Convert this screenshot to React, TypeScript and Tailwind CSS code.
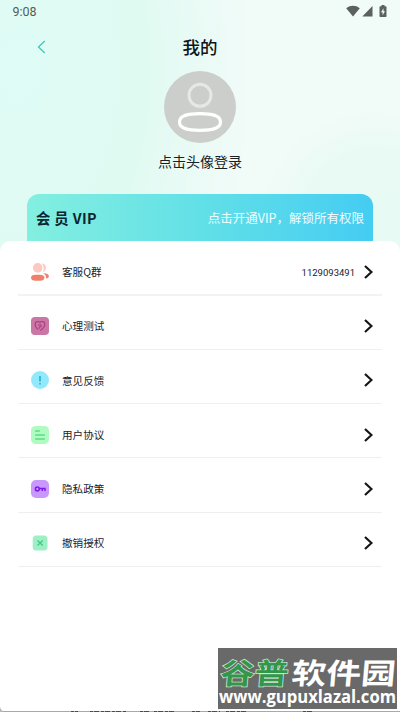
import type { ReactNode } from "react";

const ROWS: { label: string; value?: string; icon: ReactNode }[] = [
  { label: "客服Q群", value: "1129093491", icon: <GroupIcon /> },
  { label: "心理测试", icon: <HeartIcon /> },
  { label: "意见反馈", icon: <FeedbackIcon /> },
  { label: "用户协议", icon: <AgreementIcon /> },
  { label: "隐私政策", icon: <KeyIcon /> },
  { label: "撤销授权", icon: <RevokeIcon /> },
];

function GroupIcon() {
  return (
    <svg width="20" height="20" viewBox="0 0 20 20">
      <path d="M11.800 1.500c5.200 0 5.600 7.300.800 8.800 1.700-2.600 1.700-5.900-.800-8.800Z" fill="#fbc9c1" />
      <circle cx="7.700" cy="5.900" r="4.800" fill="#fbc9c1" />
      <rect x="1" y="12.700" width="13.400" height="6" rx="4.500" ry="3" fill="#f0806d" />
      <path d="M13.200 11.200c3-.300 5.600.900 5.700 2.900.100 1.600-.800 2.300-2.900 2.500.300-2.400-.500-4-2.800-5.400Z" fill="#f0806d" />
    </svg>
  );
}

function HeartIcon() {
  return (
    <svg width="20" height="20" viewBox="0 0 20 20">
      <rect x="1" y="1" width="18" height="18" rx="4" fill="#c977a5" />
      <path d="M8 13.500C5.800 11.600 5 9.900 5.100 8.200c.200-2.900 3.200-3.400 4.900-1.700 1.700-1.700 4.700-1.200 4.900 1.700.100 2.300-1.900 4.300-4.600 6.300" fill="none" stroke="#b33c82" strokeWidth="1.200" />
      <path d="M8 8.900h3.200v1.900H9.300v2" fill="none" stroke="#b33c82" strokeWidth="1" />
    </svg>
  );
}

function FeedbackIcon() {
  return (
    <svg width="20" height="20" viewBox="0 0 20 20">
      <circle cx="10" cy="10" r="9" fill="#93e9fc" />
      <path d="M10 6v5.500M10 13v1.600" stroke="#23b9d2" strokeWidth="1.700" />
    </svg>
  );
}

function AgreementIcon() {
  return (
    <svg width="20" height="20" viewBox="0 0 20 20">
      <rect x="1" y="1" width="18" height="18" rx="4.500" fill="#b0fbc1" />
      <path d="M5.800 6h3.300M5.800 10h8.400M5.800 14h8.400" stroke="#5bdd83" strokeWidth="1.700" strokeLinecap="round" />
    </svg>
  );
}

function KeyIcon() {
  return (
    <svg width="20" height="20" viewBox="0 0 20 20">
      <rect x="1" y="1" width="18" height="18" rx="5" fill="#c998fd" />
      <circle cx="7.300" cy="10" r="1.900" fill="none" stroke="#8118e4" strokeWidth="1.500" />
      <path d="M9 9.400h6v2.700M12.300 9.400v2.600" fill="none" stroke="#8118e4" strokeWidth="1.500" />
    </svg>
  );
}

function RevokeIcon() {
  return (
    <svg width="20" height="20" viewBox="0 0 20 20">
      <rect x="2.700" y="2.500" width="14.800" height="15" rx="3.500" fill="#9eefc5" />
      <path d="m7.500 7.600 5.200 4.800M12.700 7.600l-5.200 4.800" stroke="#3bcb87" strokeWidth="1.300" />
    </svg>
  );
}

function StatusBar() {
  return (
    <div className="flex h-6 items-center justify-between pl-[12.500px] pr-[13px] font-['Roboto',sans-serif] text-[12.500px] text-[#535b59]">
      <span>9:08</span>
      <div className="-mt-[3px] flex items-center text-[#5c6060]">
        <svg width="14" height="12" viewBox="0 0 14 12">
          <path d="M.2 3.300C4.200 0 9.800 0 13.800 3.300L7 11.500Z" fill="currentColor" />
        </svg>
        <svg className="ml-[2px]" width="11" height="12" viewBox="0 0 11 12">
          <path d="M10.500 1v10.500H.300Z" fill="currentColor" />
        </svg>
        <svg className="ml-[6px]" width="8" height="12" viewBox="0 0 8 12">
          <path d="M2.500 0h3v1.300h1.200q.800 0 .800.800v9.100q0 .800-.800.800H1.300q-.800 0-.800-.800V2.100q0-.800.800-.800h1.200Z" fill="currentColor" />
          <path d="M4.500 3.200 2 7.200h1.600v3L6 6.200H4.500Z" fill="#f1faf6" />
        </svg>
      </div>
    </div>
  );
}

function Header() {
  return (
    <header className="h-[241px]">
      <StatusBar />
      <div className="flex h-[46px] items-center px-9">
        <svg className="-mt-px" width="12" height="14" viewBox="0 0 12 14">
          <path d="M8.800 1 2.500 7l6.300 6" fill="none" stroke="#45c5b7" strokeWidth="1.300" />
        </svg>
        <h1 className="flex-1 pr-3 text-center text-[17.500px] font-medium text-[#0b1420]">我的</h1>
      </div>
      <div className="flex h-[124px] flex-col items-center">
        <svg className="mt-px" width="72" height="72" viewBox="0 0 72 72">
          <circle cx="36" cy="36" r="36" fill="#cbcecb" />
          <circle cx="36" cy="24.300" r="11" fill="none" stroke="#e5e8e5" strokeWidth="3" />
          <path d="M36 42.700c12 0 20.500 1.500 20.500 8.300S48 59.300 36 59.300 15.500 57.800 15.500 51 24 42.700 36 42.700Z" fill="none" stroke="#fff" strokeWidth="3.200" />
        </svg>
        <p className="mt-[6px] text-sm leading-6 text-[#182226]">点击头像登录</p>
      </div>
      <div className="mx-[27px] flex h-[47px] items-center justify-between rounded-t-[12px] bg-linear-to-r from-[#83efe0] via-[#62e0e7] to-[#44ccf2] pl-[9px] pr-[9px]">
        <span className="text-[14.300px] font-bold tracking-[0.400px] text-[#0b2630]">会 员 VIP</span>
        <span className="mt-px text-[12.500px] text-[#effdff]">点击开通VIP，解锁所有权限</span>
      </div>
    </header>
  );
}

function Watermark() {
  return (
    <div className="absolute left-[218px] top-[648px] h-[61px] w-[179px] bg-[#696969]">
      <svg width="179" height="61" viewBox="0 0 179 61" className="overflow-visible font-['Noto_Sans_CJK_SC',sans-serif] font-bold">
        <g transform="skewX(-5)" fontSize="29">
          <text x="5" y="36" textLength="68" lengthAdjust="spacingAndGlyphs" fill="#32964b" stroke="#cfe8d4" strokeWidth="1.400" paintOrder="stroke">谷普</text>
          <text x="76" y="36" textLength="104" lengthAdjust="spacingAndGlyphs" fill="#fff">软件园</text>
        </g>
        <text x="1" y="55" textLength="177" lengthAdjust="spacingAndGlyphs" className="font-['Open_Sans',sans-serif] font-bold" fontSize="17" fill="#fff">www.gupuxlazal.com</text>
      </svg>
    </div>
  );
}

// Top slivers of the navigation labels below the fold
function BottomEdge() {
  return (
    <svg className="absolute bottom-0 left-0" width="400" height="5" viewBox="0 0 400 5">
      <path d="M0 0q1 4 5 5H0Z" fill="#b9b9b9" />
      <path d="M3 4.500h397" stroke="#aaa9a3" />
      <path d="M71 4.500h7M90 4.500h36M140 4.500h10M154 4.500h20M192 4.500h8M208 4.500h12M226 4.500h20M303 4.500h9" stroke="#4b4b47" strokeDasharray="3 1 5 2" />
    </svg>
  );
}

export default function App() {
  return (
    <div className="relative h-[712px] w-[400px] overflow-hidden bg-white font-['Noto_Sans_CJK_SC',sans-serif]">
      <div className="bg-[radial-gradient(circle_at_375px_225px,#e7faf3_0,#e9faf4_75px,transparent_115px),radial-gradient(ellipse_at_20px_70px,#dffcf6_0,#dffaf1_125px,#e5faf4_150px,transparent_230px)] bg-[#f1fbf8]">
        <Header />
        <main className="h-[471px] rounded-t-[10px] bg-white px-[18px]">
          {ROWS.map(({ label, value, icon }) => (
            <div key={label} className="flex h-[54.300px] items-center border-b border-[#efefef] pl-3 pr-[9px] pt-[8px] first:h-[54.500px] first:border-b-2 first:border-[#f3f3f3] first:pt-[10px]">
              {icon}
              <span className="ml-3 text-[10.600px] text-[#20232e]">{label}</span>
              <span className="ml-auto mr-[9px] mt-px font-['Roboto',sans-serif] text-[9.500px] text-[#20232e]">{value}</span>
              <svg width="9" height="14" viewBox="0 0 9 14">
                <path d="m1 1 6.500 6L1 13" fill="none" stroke="#151515" strokeWidth="2.200" />
              </svg>
            </div>
          ))}
        </main>
      </div>
      <BottomEdge />
      <Watermark />
    </div>
  );
}
